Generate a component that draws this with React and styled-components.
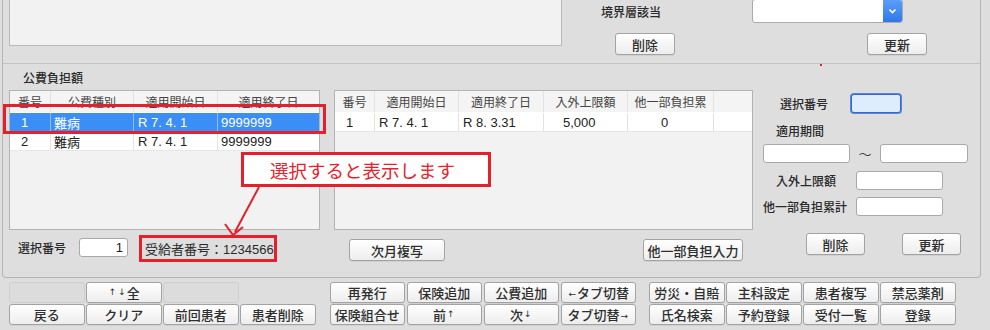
import React from "react";
import styled, { createGlobalStyle } from "styled-components";

const GlobalStyle = createGlobalStyle`
  html, body { margin: 0; padding: 0; background: #dedede; }
  body { font-family: "Liberation Sans", "Noto Sans CJK JP", sans-serif; color: #333; }
  * { box-sizing: border-box; }
`;

const Screen = styled.div`
  position: relative;
  width: 990px;
  height: 330px;
  overflow: hidden;
  background: #dedede;
`;

const Panel = styled.div`
  margin-left: 2px;
  width: 979px;
  height: 278px;
  border: 1px solid #b5b5b5;
  border-top: none;
  border-radius: 0 0 4px 4px;
  display: flex;
  flex-direction: column;
`;

const TopSection = styled.div`
  height: 64px;
  flex: none;
  border-bottom: 1px solid #c2c2c2;
  display: flex;
  padding-left: 6px;
`;

const MemoArea = styled.div`
  width: 553px;
  height: 47px;
  margin-top: -1px;
  border: 1px solid #b9b9b9;
  background: #f2f2f2;
`;

const TopRight = styled.div`
  display: flex;
  flex-direction: column;
  padding-left: 39px;
`;

const TopRow = styled.div`
  display: flex;
  align-items: center;
  height: ${(p) => p.$h}px;
  margin-top: ${(p) => p.$mt}px;
`;

const Label = styled.span`
  font-family: "Noto Sans CJK JP", sans-serif;
  font-size: 12px;
  font-weight: 500;
  color: #2a2a2a;
  white-space: nowrap;
  display: inline-block;
  width: ${(p) => (p.$w ? `${p.$w}px` : "auto")};
  margin-left: ${(p) => p.$ml || 0}px;
  flex: none;
`;

const Select = styled.div`
  width: 151px;
  height: 24px;
  border: 1px solid #ababab;
  border-radius: 3px;
  background: #fff;
  display: flex;
  justify-content: flex-end;
  overflow: hidden;
`;

const SelectArrow = styled.div`
  width: 19px;
  height: 100%;
  background: linear-gradient(#5b9ef9, #2f78ea);
  display: flex;
  align-items: center;
  justify-content: center;
`;

const Button = styled.button`
  width: ${(p) => p.$w}px;
  height: ${(p) => p.$h || 22}px;
  margin-left: ${(p) => p.$ml || 0}px;
  margin-right: ${(p) => p.$mr || 0}px;
  padding: 0;
  flex: none;
  border: 1px solid #a3a3a3;
  border-radius: 3px;
  background: linear-gradient(#ffffff, #ededed);
  box-shadow: 0 1px 0 rgba(0, 0, 0, 0.06);
  font-family: "Noto Sans CJK JP", sans-serif;
  font-size: 13px;
  font-weight: 500;
  color: #2e2e2e;
  white-space: nowrap;
  display: flex;
  align-items: center;
  justify-content: center;
`;

const SmallArrow = styled.span`
  font-family: "DejaVu Sans", sans-serif;
  font-size: 9px;
  margin: 0 1px;
  position: relative;
  top: ${(p) => p.$dy || 0}px;
`;

const BlankButton = styled.div`
  border: 1px solid #cdcdcd;
  border-radius: 3px;
  background: #dcdcdc;
`;

const BottomSection = styled.div`
  flex: 1;
  padding-left: 6px;
  display: flex;
  flex-direction: column;
`;

const SectionTitle = styled.div`
  height: 26px;
  display: flex;
  align-items: center;
  padding-left: 14px;
  font-family: "Noto Sans CJK JP", sans-serif;
  font-size: 12px;
  font-weight: 500;
  color: #2a2a2a;
`;

const Content = styled.div`
  display: grid;
  grid-template-columns: 311px 419px 204px;
  column-gap: 14px;
  & > :last-child { margin-left: -4px; }
`;

const Column = styled.div`
  display: flex;
  flex-direction: column;
`;

const TableBox = styled.div`
  height: 140px;
  border: 1px solid #b3b3b3;
  background: #f2f2f2;
  overflow: hidden;
`;

const TRow = styled.div`
  display: grid;
  grid-template-columns: ${(p) => p.$cols};
  height: ${(p) => (p.$head ? 22 : 19)}px;
  background: ${(p) => (p.$selected ? "#3a8ef6" : p.$head ? "#f4f4f4" : "#ffffff")};
  color: ${(p) => (p.$selected ? "#ffffff" : "#222")};
  border-bottom: 1px solid ${(p) => (p.$selected ? "#3a8ef6" : p.$head ? "#ffffff" : "#e6e6e6")};
`;

const TCell = styled.div`
  display: flex;
  align-items: center;
  justify-content: ${(p) => (p.$head ? "center" : "flex-start")};
  padding-left: ${(p) => (p.$head ? 0 : p.$pad || 4)}px;
  font-size: ${(p) => (p.$head ? 12 : 13)}px;
  color: ${(p) => (p.$head ? "#444" : "inherit")};
  border-right: 1px solid ${(p) => (p.$sel ? "#8ebdf8" : "#e3e3e3")};
  white-space: nowrap;
  overflow: hidden;
  &:last-child { border-right: none; }
`;

const FooterRow = styled.div`
  display: flex;
  align-items: center;
  height: ${(p) => p.$h}px;
  margin-top: ${(p) => p.$mt}px;
`;

const NumInput = styled.input`
  width: ${(p) => p.$w}px;
  height: ${(p) => p.$h || 19}px;
  flex: none;
  margin-left: ${(p) => p.$ml || 0}px;
  border: 1px solid #a9a9a9;
  border-radius: 3px;
  background: #fff;
  font-family: "Liberation Sans", sans-serif;
  font-size: 13px;
  color: #222;
  text-align: right;
  padding: 0 4px;
  outline: none;
`;

const FocusInput = styled(NumInput)`
  background: #deedfd;
  border: 1px solid #3567cc;
  box-shadow: 0 0 0 1px #5b86d8;
`;

const RecipientBox = styled.div`
  margin-left: 11px;
  width: 138px;
  height: 27px;
  border: 3px solid #e5202b;
  display: flex;
  align-items: center;
  padding-left: 3px;
  font-size: 13px;
  color: #2a2a2a;
  white-space: nowrap;
  margin-top: 2px;
`;

const FormRow = styled.div`
  display: flex;
  align-items: center;
  height: ${(p) => p.$h || 19}px;
  margin-top: ${(p) => p.$mt || 0}px;
  padding-left: ${(p) => p.$pl || 0}px;
`;

const Tilde = styled.span`
  width: 30px;
  text-align: center;
  font-size: 13px;
  color: #444;
  flex: none;
`;

const ButtonBar = styled.div`
  display: flex;
  padding-left: 9px;
  margin-top: 4px;
`;

const ButtonGroup = styled.div`
  display: grid;
  grid-template-columns: repeat(4, 75.5px);
  grid-auto-rows: 20.5px;
  column-gap: 1.5px;
  row-gap: 1.5px;
  margin-left: ${(p) => p.$ml || 0}px;
  & > button { width: auto; height: auto; }
`;

const Callout = styled.div`
  position: absolute;
  left: 241px;
  top: 152px;
  width: 250px;
  height: 35px;
  border: 3px solid #e5202b;
  background: #ffffff;
  display: flex;
  align-items: center;
  padding-left: 26px;
  font-family: "Noto Sans CJK JP", sans-serif;
  font-size: 18.5px;
  color: #e8222c;
  white-space: nowrap;
`;

const RowHighlight = styled.div`
  position: absolute;
  left: 3px;
  top: 104px;
  width: 323px;
  height: 30px;
  border: 3px solid #e5202b;
`;

const ArrowSvg = styled.svg`
  position: absolute;
  left: 220px;
  top: 184px;
`;

const RedDot = styled.span`
  position: absolute;
  left: 820px;
  top: 64px;
  width: 2px;
  height: 2px;
  background: #e5202b;
`;

const leftCols = "41px 83px 84px 1fr";
const midCols = "40px 84px 85px 84px 86px 1fr";

const leftHead = ["番号", "公費種別", "適用開始日", "適用終了日"];
const leftRows = [
  ["1", "難病", "R 7. 4. 1", "9999999"],
  ["2", "難病", "R 7. 4. 1", "9999999"],
];
const leftPads = [11, 3, 4, 3];

const midHead = ["番号", "適用開始日", "適用終了日", "入外上限額", "他一部負担累", ""];
const midRow = ["1", "R 7. 4. 1", "R 8. 3.31", "5,000", "0", ""];
const midPads = [11, 4, 4, 19, 33, 4];

const A = ({ c, dy }) => <SmallArrow $dy={dy}>{c}</SmallArrow>;

const bar1 = [
  null,
  <>
    <A c="↑" />
    <A c="↓" />全
  </>,
  null,
  "none",
  "戻る",
  "クリア",
  "前回患者",
  "患者削除",
];
const bar2 = [
  "再発行",
  "保険追加",
  "公費追加",
  <>
    <A c="←" dy={2} />タブ切替
  </>,
  "保険組合せ",
  <>
    前<A c="↑" />
  </>,
  <>
    次<A c="↓" />
  </>,
  <>
    タブ切替<A c="→" dy={2} />
  </>,
];
const bar3 = ["労災・自賠", "主科設定", "患者複写", "禁忌薬剤", "氏名検索", "予約登録", "受付一覧", "登録"];

function renderGroup(items) {
  return items.map((t, i) => {
    if (t === "none") return <span key={i} />;
    if (t === null) return <BlankButton key={i} />;
    return (
      <Button key={i} $w={75}>
        {t}
      </Button>
    );
  });
}

export default function App() {
  return (
    <Screen>
      <GlobalStyle />
      <Panel>
        <TopSection>
          <MemoArea />
          <TopRight>
            <TopRow $h={24} $mt={-1}>
              <Label $w={151}>境界層該当</Label>
              <Select>
                <SelectArrow>
                  <svg width="9" height="6" viewBox="0 0 9 6">
                    <path d="M1.5 1.5 L4.5 4.5 L7.5 1.5" fill="none" stroke="#fff" strokeWidth="1.6" />
                  </svg>
                </SelectArrow>
              </Select>
            </TopRow>
            <TopRow $h={22} $mt={10}>
              <Button $w={60} $ml={14}>削除</Button>
              <Button $w={60} $ml={192}>更新</Button>
            </TopRow>
          </TopRight>
        </TopSection>
        <BottomSection>
          <SectionTitle>公費負担額</SectionTitle>
          <Content>
            <Column>
              <TableBox>
                <TRow $head $cols={leftCols}>
                  {leftHead.map((h, i) => (
                    <TCell key={i} $head>{h}</TCell>
                  ))}
                </TRow>
                {leftRows.map((r, ri) => (
                  <TRow key={ri} $cols={leftCols} $selected={ri === 0}>
                    {r.map((c, i) => (
                      <TCell key={i} $pad={leftPads[i]} $sel={ri === 0}>{c}</TCell>
                    ))}
                  </TRow>
                ))}
              </TableBox>
              <FooterRow $h={27} $mt={4}>
                <Label $w={61} $ml={9}>選択番号</Label>
                <NumInput readOnly value="1" $w={49} />
                <RecipientBox>受給者番号：1234566</RecipientBox>
              </FooterRow>
            </Column>
            <Column>
              <TableBox>
                <TRow $head $cols={midCols}>
                  {midHead.map((h, i) => (
                    <TCell key={i} $head>{h}</TCell>
                  ))}
                </TRow>
                <TRow $cols={midCols}>
                  {midRow.map((c, i) => (
                    <TCell key={i} $pad={midPads[i]}>{c}</TCell>
                  ))}
                </TRow>
              </TableBox>
              <FooterRow $h={22} $mt={9}>
                <Button $w={96} $ml={15}>次月複写</Button>
                <Button $w={100} $ml={198}>他一部負担入力</Button>
              </FooterRow>
            </Column>
            <Column>
              <FormRow $mt={4} $pl={17} $h={19}>
                <Label $w={71}>選択番号</Label>
                <FocusInput readOnly value="" $w={50} />
              </FormRow>
              <FormRow $mt={8} $pl={13} $h={18}>
                <Label>適用期間</Label>
              </FormRow>
              <FormRow $mt={5} $h={19}>
                <NumInput readOnly value="" $w={87} />
                <Tilde>～</Tilde>
                <NumInput readOnly value="" $w={88} />
              </FormRow>
              <FormRow $mt={8} $pl={13} $h={19}>
                <Label $w={80}>入外上限額</Label>
                <NumInput readOnly value="" $w={87} />
              </FormRow>
              <FormRow $mt={7} $h={19}>
                <Label $w={93}>他一部負担累計</Label>
                <NumInput readOnly value="" $w={87} />
              </FormRow>
              <FormRow $mt={17} $h={22}>
                <Button $w={59} $ml={43}>削除</Button>
                <Button $w={59} $ml={37}>更新</Button>
              </FormRow>
            </Column>
          </Content>
        </BottomSection>
      </Panel>
      <ButtonBar>
        <ButtonGroup>{renderGroup(bar1)}</ButtonGroup>
        <ButtonGroup $ml={14}>{renderGroup(bar2)}</ButtonGroup>
        <ButtonGroup $ml={13}>{renderGroup(bar3)}</ButtonGroup>
      </ButtonBar>
      <RowHighlight />
      <Callout>選択すると表示します</Callout>
      <ArrowSvg width="50" height="60" viewBox="0 0 50 60">
        <line x1="39" y1="3" x2="15" y2="48" stroke="#e5202b" strokeWidth="2" />
        <path d="M5 40 L13 51 L23 43" fill="none" stroke="#e5202b" strokeWidth="2" />
      </ArrowSvg>
      <RedDot />
    </Screen>
  );
}
